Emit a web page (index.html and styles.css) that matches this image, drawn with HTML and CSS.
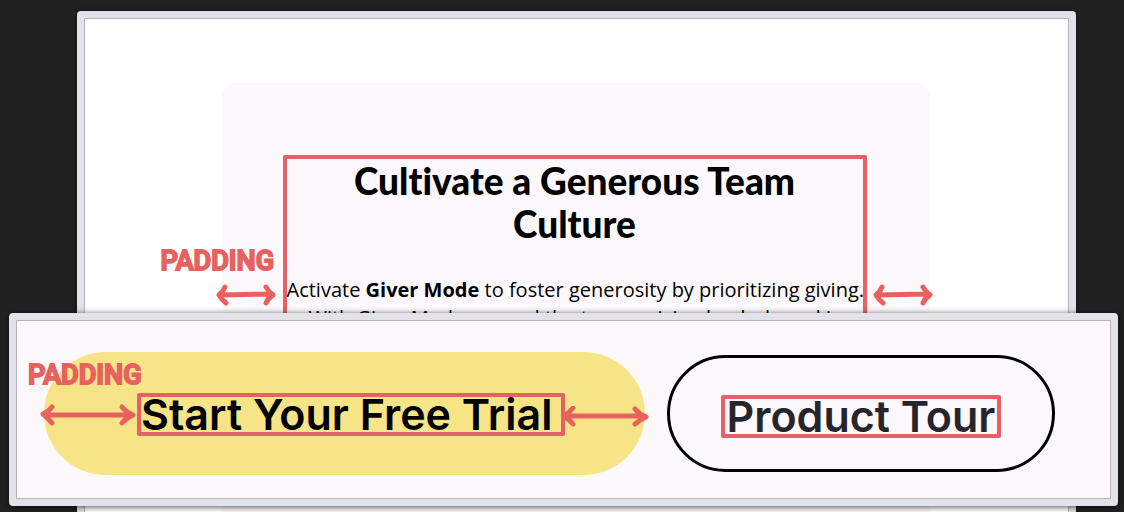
FILE: index.html
```
<!DOCTYPE html>
<html lang="en">
<head>
<meta charset="utf-8">
<meta name="viewport" content="width=device-width, initial-scale=1">
<title>Padding examples</title>
<link rel="stylesheet" href="styles.css">
</head>
<body>
<main class="scene">
  <section class="window window-back">
    <div class="card">
      <div class="copy">
        <h1 class="title">Cultivate a Generous Team Culture</h1>
        <p class="text">Activate <strong>Giver Mode</strong> to foster generosity by prioritizing giving.<br>With Giver Mode on, and the top receiving leaderboard is</p>
      </div>
      <span class="note note-card">PADDING</span>
      <svg class="arrow arrow-card-left" width="60" height="22" viewBox="0 0 60 22" aria-hidden="true"><path d="M4 11 56 10M9 3Q7 8 3 11Q6 16 10 19M50 3Q52 7 57 11Q52 14 50 19"/></svg>
      <svg class="arrow arrow-card-right" width="60" height="22" viewBox="0 0 60 22" aria-hidden="true"><path d="M4 11 56 10M9 3Q7 8 3 11Q6 16 10 19M50 3Q52 7 57 11Q52 14 50 19"/></svg>
    </div>
  </section>

  <section class="window window-front">
    <div class="actions">
      <button class="button button-primary" type="button">
        <span class="outline outline-wide">Start Your Free Trial</span>
        <svg class="arrow arrow-button-left" width="96" height="22" viewBox="0 0 96 22" aria-hidden="true"><path d="M4 11 92 11M12 3Q8 8 3 10Q8 14 12 19M82 3Q86 8 93 11Q86 14 82 19"/></svg>
        <svg class="arrow arrow-button-right" width="88" height="22" viewBox="0 0 88 22" aria-hidden="true"><path d="M4 10 84 10M12 2Q8 7 3 10Q8 13 12 18M74 3Q78 8 85 11Q78 14 74 18"/></svg>
      </button>
      <button class="button button-secondary" type="button">
        <span class="outline">Product Tour</span>
      </button>
    </div>
    <span class="note note-button">PADDING</span>
  </section>
</main>
</body>
</html>
```
FILE: styles.css
```
* {
  box-sizing: border-box;
}

body {
  margin: 0;
  background: #212121;
  font-family: Inter, "Liberation Sans", sans-serif;
  color: #000;
}

.scene {
  position: relative;
  display: flex;
  height: 100vh;
  padding: 11px 48px 0 77px;
  overflow: hidden;
}

.window {
  border: 7px solid #e3e2e8;
  border-radius: 4px;
  box-shadow: 0 0 4px rgba(0, 0, 0, 0.6);
}

.window-back {
  flex: 1;
  min-height: 600px;
  padding: 65px 26px 0 24px;
  background: #fff;
  outline: 1px solid #b4b3b8;
  outline-offset: -8px;
}

.card {
  position: relative;
  max-width: 708px;
  min-height: 500px;
  margin: 0 auto;
  padding: 72px 63px 0 61px;
  border-radius: 14px;
  background: #fcf8fc;
}

.copy {
  min-height: 300px;
  border: 4px solid #e46265;
  border-radius: 2px;
  text-align: center;
}

.title {
  margin: 0;
  padding: 0 60px;
  font: 900 37px/43px Lato, sans-serif;
  font-variant-ligatures: none;
}

.text {
  margin: 31px 0 0;
  font: 400 20px/28px "Open Sans", sans-serif;
  white-space: nowrap;
}

.text strong {
  font-weight: 700;
}

.window-front {
  position: absolute;
  top: 313px;
  right: 6px;
  left: 9px;
  padding: 32px 28px 24px;
  background: #fcf8fc;
  box-shadow: 0 1px 6px rgba(0, 0, 0, 0.7);
  outline: 1px solid #b4b3b8;
  outline-offset: -8px;
}

.actions {
  display: flex;
  align-items: center;
  gap: 22px;
}

.button {
  position: relative;
  border: 0;
  border-radius: 62px;
  font: 600 43px/35px Inter, sans-serif;
  white-space: nowrap;
}

.button-primary {
  padding: 41px 80px 39px 93px;
  background: #f7e487;
  color: #000;
}

.button-secondary {
  padding: 37px 51px 31px;
  border: 3px solid #000;
  background: transparent;
  color: #26252b;
}

.outline {
  display: block;
  padding: 0 2px;
  border: 4px solid #e46265;
  border-radius: 2px;
}

.outline-wide {
  padding: 0 8px 0 0;
}

.note {
  position: absolute;
  color: #e8615f;
  font: 500 27px/28px Roboto, sans-serif;
  -webkit-text-stroke: 2px #e8615f;
  paint-order: stroke fill;
  stroke-linejoin: round;
}

.note-card {
  top: 164px;
  left: -61px;
}

.note-button {
  top: 41px;
  left: 12px;
}

.arrow {
  position: absolute;
  fill: none;
  stroke: #e8615f;
  stroke-width: 5px;
  stroke-linecap: round;
  stroke-linejoin: round;
}

.arrow-card-left {
  top: 201px;
  left: -6px;
}

.arrow-card-right {
  top: 201px;
  right: -3px;
}

.arrow-button-left {
  top: 52px;
  left: -4px;
}

.arrow-button-right {
  top: 54px;
  right: -4px;
}
```
